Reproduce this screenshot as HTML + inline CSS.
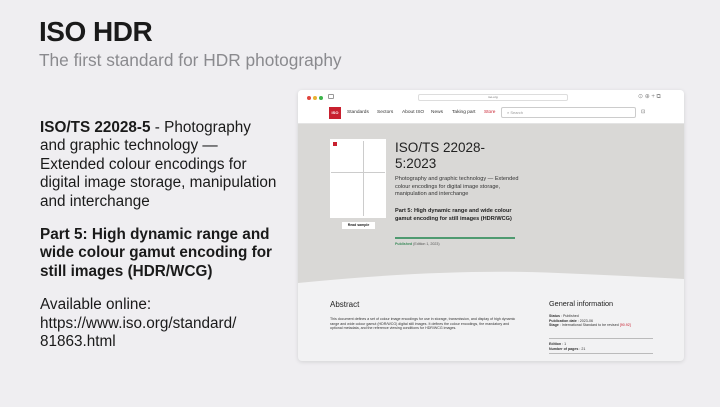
<!DOCTYPE html>
<html><head><style>
*{margin:0;padding:0;box-sizing:border-box}
body{width:720px;height:407px;background:#efeef1;font-family:"Liberation Sans",sans-serif;position:relative;overflow:hidden;color:#1a1a1a}
.a{position:absolute}
h1{position:absolute;left:39px;top:16px;font-size:28px;font-weight:bold;letter-spacing:-0.5px}
.sub{left:39px;top:50px;font-size:17.3px;color:#8a8a8e}
.body{left:40px;top:119px;width:238px;font-size:15.3px;line-height:18.4px}
.body p{margin-bottom:15px}
.win{left:298px;top:90px;width:386px;height:271px;background:#f2f2f3;border-radius:4px;overflow:hidden;box-shadow:0 1px 4px rgba(0,0,0,.12)}
.bar{left:0;top:0;width:386px;height:34px;background:#fff;border-bottom:1px solid #e4e4e4}
.dot{width:4px;height:4px;border-radius:50%;top:6px}
.nav{font-size:4.8px;color:#333;top:20px}
.hero{left:0;top:34px;width:386px;height:160px;background:#d9d8d6}
.s{font-size:3.6px;color:#333;line-height:4.5px}
</style></head><body>
<h1>ISO HDR</h1>
<div class="a sub">The first standard for HDR photography</div>
<div class="a body">
<p><b>ISO/TS 22028-5</b> - Photography and graphic technology — Extended colour encodings for digital image storage, manipulation and interchange</p>
<p><b>Part 5: High dynamic range and wide colour gamut encoding for still images (HDR/WCG)</b></p>
<p>Available online: https://www.iso.org/standard/ 81863.html</p>
</div>
<div class="a win">
 <div class="a hero"></div>
 <svg class="a" style="left:0;top:170px" width="386" height="40" viewBox="0 0 386 40"><path d="M0 23 Q150 8 260 13 Q330 16 386 19 L386 40 L0 40Z" fill="#f2f2f3"/></svg>
 <div class="a bar"></div>
 <div class="a dot" style="left:9px;background:#e0443e"></div>
 <div class="a dot" style="left:15px;background:#e9b230"></div>
 <div class="a dot" style="left:21px;background:#3bb54a"></div>
 <div class="a" style="left:30px;top:4px;width:6px;height:5px;border:1px solid #999;border-radius:1px"></div>
 <div class="a" style="left:120px;top:4px;width:150px;height:7px;border:1px solid #ddd;border-radius:2px;font-size:3px;color:#666;text-align:center;line-height:5px">iso.org</div>
 <div class="a" style="left:340px;top:3px;font-size:6px;color:#888">⊙ ⊕ + ⧉</div>
 <div class="a" style="left:31px;top:17px;width:12px;height:12px;background:#c8202f;color:#fff;font-size:4px;font-weight:bold;text-align:center;line-height:12px">ISO</div>
 <div class="a nav" style="left:49px">Standards</div>
 <div class="a nav" style="left:79px">Sectors</div>
 <div class="a nav" style="left:104px">About ISO</div>
 <div class="a nav" style="left:133px">News</div>
 <div class="a nav" style="left:154px">Taking part</div>
 <div class="a nav" style="left:186px;color:#c8202f">Store</div>
 <div class="a" style="left:203px;top:17px;width:135px;height:11px;border:1px solid #ccc;border-radius:2px;font-size:4px;color:#999;padding:2px 5px">⌕ Search</div>
 <div class="a nav" style="left:343px;color:#666">⊡</div>
 <div class="a" style="left:32px;top:49px;width:56px;height:79px;background:#fff"><div class="a" style="left:3px;top:3px;width:4px;height:4px;background:#c8202f"></div><div class="a" style="left:33px;top:2px;width:1px;height:75px;background:#ccc"></div><div class="a" style="left:1px;top:33px;width:54px;height:1px;background:#ccc"></div></div>
 <div class="a" style="left:44px;top:132px;width:33px;height:7px;background:#fff;font-size:3.5px;font-weight:bold;text-align:center;line-height:7px">Read sample</div>
 <div class="a" style="left:97px;top:50px;font-size:13.5px;line-height:15.5px;color:#222">ISO/TS 22028-<br>5:2023</div>
 <div class="a" style="left:97px;top:86px;width:126px;font-size:5.6px;line-height:7.6px;color:#333">Photography and graphic technology — Extended colour encodings for digital image storage, manipulation and interchange</div>
 <div class="a" style="left:97px;top:118px;width:128px;font-size:5.6px;line-height:7.6px;color:#222;font-weight:bold">Part 5: High dynamic range and wide colour gamut encoding for still images (HDR/WCG)</div>
 <div class="a" style="left:97px;top:147px;width:120px;height:1.5px;background:#4f9a70"></div>
 <div class="a" style="left:97px;top:152px;font-size:3.6px;color:#555"><b style="color:#3a8a5a">Published</b> (Edition 1, 2023)</div>
 <div class="a" style="left:32px;top:210px;font-size:8px;color:#222">Abstract</div>
 <div class="a s" style="left:32px;top:227px;width:190px">This document defines a set of colour image encodings for use in storage, transmission, and display of high dynamic range and wide colour gamut (HDR/WCG) digital still images. It defines the colour encodings, the mandatory and optional metadata, and the reference viewing conditions for HDR/WCG images.</div>
 <div class="a" style="left:251px;top:209px;font-size:7.3px;color:#222">General information</div>
 <div class="a s" style="left:251px;top:224px;width:104px"><b>Status</b> : Published<br><b>Publication date</b> : 2023-06<br><b>Stage</b> : International Standard to be revised <span style="color:#c8202f">[90.92]</span></div>
 <div class="a" style="left:251px;top:248px;width:104px;height:1px;background:#bbb"></div>
 <div class="a s" style="left:251px;top:252px"><b>Edition</b> : 1<br><b>Number of pages</b> : 21</div>
 <div class="a" style="left:251px;top:263px;width:104px;height:1px;background:#bbb"></div>
</div>
</body></html>
